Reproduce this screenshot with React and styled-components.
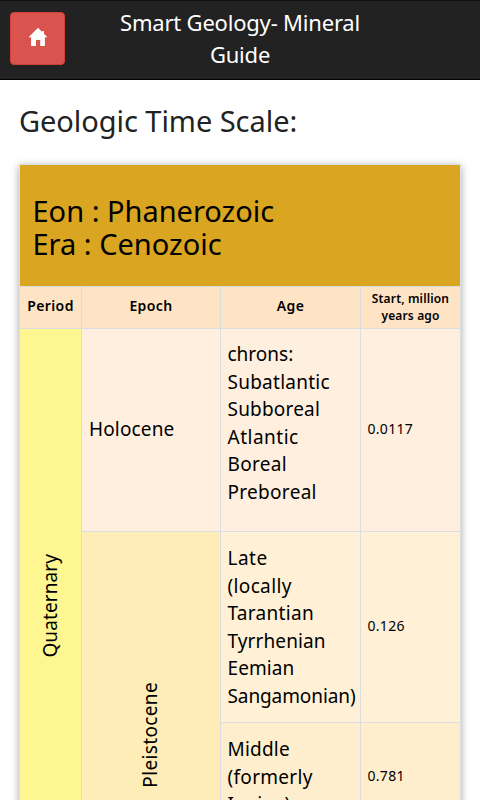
import React from "react"
import styled, { createGlobalStyle } from "styled-components"

const rows = [
  {
    epoch: "Holocene",
    lines: [
      { text: "chrons:" },
      { text: "Subatlantic", spacing: 0.25 },
      { text: "Subboreal", spacing: 0.2 },
      { text: "Atlantic", spacing: 0.5 },
      { text: "Boreal", spacing: 0.3 },
      { text: "Preboreal", spacing: 0.3 },
    ],
    start: "0.0117",
    color: "#feefdf",
    height: 203,
  },
  {
    lines: [
      { text: "Late", spacing: 0.5 },
      { text: "(locally", spacing: 0.35 },
      { text: "Tarantian", spacing: 0.3 },
      { text: "Tyrrhenian", spacing: 0.1 },
      { text: "Eemian", spacing: 0.1 },
      { text: "Sangamonian)", spacing: -0.1 },
    ],
    start: "0.126",
    color: "#fff0d6",
    height: 191,
  },
  {
    lines: [
      { text: "Middle", spacing: 0.2 },
      { text: "(formerly", spacing: 0.3 },
      { text: "Ionian)" },
    ],
    start: "0.781",
    color: "#feeecd",
    height: 109,
  },
]

const App = () => {
  return (
    <Page>
      <GlobalStyle />
      <Navbar>
        <HomeButton aria-label="Home">
          <svg width="20" height="20" viewBox="0 0 20 20" fill="#fff">
            <path d="M10 0.8 L14.2 5 V4 H16 V6.8 L19.4 10.3 H16.9 V19 H12.2 V13 H8 V19 H3.1 V10.3 H0.6 Z" />
          </svg>
        </HomeButton>
        <Brand>
          Smart Geology- Mineral
          <br />
          Guide
        </Brand>
      </Navbar>
      <Heading>Geologic Time Scale:</Heading>
      <TimeTable>
        <colgroup>
          <Column $width={62} />
          <Column $width={139} />
          <Column $width={140} />
          <Column $width={100} />
        </colgroup>
        <tbody>
          <Row $height={122}>
            <EonCell colSpan={4}>
              Eon : Phanerozoic
              <br />
              Era : Cenozoic
            </EonCell>
          </Row>
          <Row $height={42}>
            <HeadCell>Period</HeadCell>
            <HeadCell>Epoch</HeadCell>
            <HeadCell>Age</HeadCell>
            <HeadCell $small>
              Start, million
              <br />
              years ago
            </HeadCell>
          </Row>
          {rows.map((row, i) => (
            <Row key={row.start} $height={row.height}>
              {i === 0 && (
                <SpanCell rowSpan={3} $color="#fef691" $top={225}>
                  <VerticalText>Quaternary</VerticalText>
                </SpanCell>
              )}
              {row.epoch && <EpochCell $color={row.color}>{row.epoch}</EpochCell>}
              {i === 1 && (
                <SpanCell rowSpan={2} $color="#feedb7" $top={150}>
                  <VerticalText $spacing={0.35}>Pleistocene</VerticalText>
                </SpanCell>
              )}
              <AgeCell $color={row.color} $top={i === 0 ? 12 : 13}>
                {row.lines.map(line => (
                  <AgeLine key={line.text} $spacing={line.spacing}>
                    {line.text}
                  </AgeLine>
                ))}
              </AgeCell>
              <StartCell $color={row.color}>{row.start}</StartCell>
            </Row>
          ))}
        </tbody>
      </TimeTable>
    </Page>
  )
}

const GlobalStyle = createGlobalStyle`
  * {
    box-sizing: border-box;
  }

  body {
    margin: 0;
    background: #fff;
    color: #000;
    font-family: "Noto Sans", sans-serif;
  }
`

const Page = styled.div`
  width: 480px;
  height: 800px;
  overflow: hidden;
`

const Navbar = styled.header`
  display: grid;
  grid-template-columns: 55px 1fr 55px;
  align-items: start;
  height: 80px;
  padding: 0 10px;
  background: #222;
  border-top: 1px solid #111;
  border-bottom: 1px solid #000;
`

const HomeButton = styled.button`
  display: flex;
  align-items: center;
  justify-content: center;
  width: 55px;
  height: 53px;
  margin-top: 11px;
  padding: 0 0 3px 1px;
  background: #d9534f;
  border: 1px solid #d43f3a;
  border-radius: 4px;
`

const Brand = styled.div`
  padding-top: 5px;
  color: #fff;
  font-size: 22px;
  line-height: 32px;
  letter-spacing: -0.2px;
  text-align: center;
  white-space: nowrap;
`

const Heading = styled.h1`
  margin: 21px 0 23px 19px;
  color: #222;
  font-size: 29px;
  font-weight: 400;
  line-height: 40px;
  letter-spacing: -0.05px;
`

const TimeTable = styled.table`
  width: 442px;
  margin-left: 19px;
  table-layout: fixed;
  border-collapse: collapse;
  box-shadow: 0 2px 8px rgba(0, 0, 0, 0.35);
`

const Column = styled.col`
  width: ${props => props.$width}px;
`

const Row = styled.tr`
  height: ${props => props.$height}px;
`

const Cell = styled.td`
  padding: 0 7px;
  background: ${props => props.$color};
  border: 1px solid #dadde2;
  font-size: 19px;
  line-height: 27.5px;
  white-space: nowrap;
`

const EonCell = styled(Cell)`
  padding: 3px 12.5px 0;
  background: #daa520;
  font-size: 29px;
  line-height: 33px;
`

const HeadCell = styled.th`
  padding: ${props => (props.$small ? "0 0 2px" : "0 0 4px")};
  background: #fee3c4;
  border: 1px solid #dadde2;
  font-size: ${props => (props.$small ? 12 : 14)}px;
  font-weight: 600;
  line-height: 17px;
  letter-spacing: ${props => (props.$small ? 0.15 : 0.4)}px;
  white-space: nowrap;
`

const EpochCell = styled(Cell)`
  letter-spacing: 0.15px;
`

const SpanCell = styled(Cell)`
  padding: ${props => props.$top}px 0 0;
  vertical-align: top;
`

const VerticalText = styled.div`
  margin: 0 auto;
  width: 28px;
  letter-spacing: ${props => props.$spacing || 0.1}px;
  writing-mode: vertical-rl;
  transform: rotate(180deg);
`

const AgeCell = styled(Cell)`
  padding: ${props => props.$top}px 0 0 6.5px;
  vertical-align: top;
`

const AgeLine = styled.div`
  height: 27.5px;
  letter-spacing: ${props => props.$spacing || 0}px;
`

const StartCell = styled(Cell)`
  padding: 0 0 2px 6.5px;
  font-size: 14px;
  letter-spacing: 0.3px;
`

export default App
